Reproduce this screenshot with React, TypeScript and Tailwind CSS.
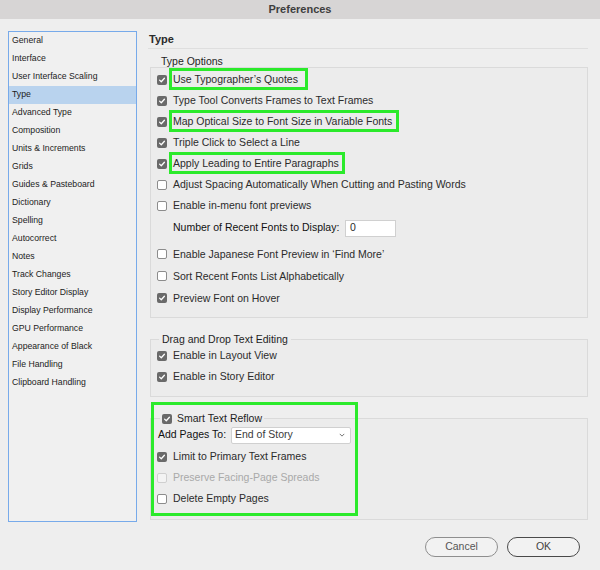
import React from "react";

const font = { fontFamily: '"Liberation Sans", Arial, sans-serif' };

const sidebarItems = [
  "General",
  "Interface",
  "User Interface Scaling",
  "Type",
  "Advanced Type",
  "Composition",
  "Units & Increments",
  "Grids",
  "Guides & Pasteboard",
  "Dictionary",
  "Spelling",
  "Autocorrect",
  "Notes",
  "Track Changes",
  "Story Editor Display",
  "Display Performance",
  "GPU Performance",
  "Appearance of Black",
  "File Handling",
  "Clipboard Handling",
];

function Check({ checked, disabled }: { checked?: boolean; disabled?: boolean }) {
  if (checked) {
    return (
      <span className="flex size-[10px] shrink-0 items-center justify-center rounded-[2px] bg-[#6a6a6a]">
        <svg viewBox="0 0 10 10" className="size-[8px]">
          <path d="M2 5.2 L4.1 7.2 L8 2.8" fill="none" stroke="#fff" strokeWidth="1.6" strokeLinecap="round" strokeLinejoin="round" />
        </svg>
      </span>
    );
  }
  return (
    <span
      className={
        disabled
          ? "size-[10px] shrink-0 rounded-[2px] border border-[#cfcfcf] bg-[#f3f3f3]"
          : "size-[10px] shrink-0 rounded-[2px] border border-[#8c8c8c] bg-white"
      }
    />
  );
}

function Row({
  label,
  checked,
  disabled,
  h = "h-[21px]",
  mark,
}: {
  label: string;
  checked?: boolean;
  disabled?: boolean;
  h?: string;
  mark?: string;
}) {
  return (
    <div className={`flex items-center gap-[6px] pl-[6px] ${h}`}>
      <Check checked={checked} disabled={disabled} />
      <span className={`relative whitespace-nowrap text-[10.5px] leading-[13px] ${disabled ? "text-[#a9a9a9]" : "text-[#2b2b2b]"}`}>
        {label}
        {mark && <span className={`pointer-events-none absolute -left-[4px] -top-[5px] h-[22px] border-[3px] border-[#2bea2b] ${mark}`} />}
      </span>
    </div>
  );
}

export default function App() {
  return (
    <div className="h-[570px] w-[600px] overflow-hidden bg-[#eeeeee]" style={font}>
      <div className="flex h-[19px] items-center justify-center bg-[#d7d5d5] text-[11px] font-bold text-[#3e3e3e]">
        Preferences
      </div>

      <div className="flex pl-[8px] pt-[12px]">
        {/* category list */}
        <div className="h-[491px] w-[129px] border border-[#77aaea] bg-[#f0f0f0]">
          {sidebarItems.map((item) => (
            <div
              key={item}
              className={`flex h-[18px] items-center pl-[3px] text-[8.7px] text-[#1c1c1c] ${item === "Type" ? "bg-[#b9d3ee]" : ""}`}
            >
              {item}
            </div>
          ))}
        </div>

        <div className="relative ml-[11px] w-[440px]">
          <div className="h-[18px] border-b border-[#dedede] pl-px text-[11px] font-bold leading-[17px] text-[#2b2b2b]">Type</div>

          <div className="mt-[6px] pl-[13px] text-[10.5px] leading-[13px] text-[#1e1e1e]">Type Options</div>
          <div className="-mt-px ml-[2px] h-[251px] border border-[#dadada] bg-[#ececec] pt-px">
            <Row label="Use Typographer’s Quotes" checked mark="w-[139px]" />
            <Row label="Type Tool Converts Frames to Text Frames" checked />
            <Row label="Map Optical Size to Font Size in Variable Fonts" checked mark="w-[230px]" />
            <Row label="Triple Click to Select a Line" checked />
            <Row label="Apply Leading to Entire Paragraphs" checked mark="w-[176px]" />
            <Row label="Adjust Spacing Automatically When Cutting and Pasting Words" />
            <Row label="Enable in-menu font previews" />
            <div className="flex h-[24px] items-center pl-[22px]">
              <span className="w-[172px] shrink-0 whitespace-nowrap text-[10.5px] text-[#111]">Number of Recent Fonts to Display:</span>
              <div className="flex h-[17px] w-[51px] items-center border border-[#d0d0d0] bg-white pl-[4px] text-[10.5px] text-[#2b2b2b]">
                0
              </div>
            </div>
            <div className="mt-[3px]">
              <Row label="Enable Japanese Font Preview in ‘Find More’" h="h-[22px]" />
              <Row label="Sort Recent Fonts List Alphabetically" h="h-[22px]" />
              <Row label="Preview Font on Hover" checked h="h-[22px]" />
            </div>
          </div>

          <fieldset className="ml-[2px] mt-[16px] h-[63px] border border-[#dadada] bg-[#ececec]">
            <legend className="ml-[8px] px-[3px] text-[10.5px] leading-[11px] text-[#1e1e1e]">Drag and Drop Text Editing</legend>
            <Row label="Enable in Layout View" checked />
            <Row label="Enable in Story Editor" checked />
          </fieldset>

          <fieldset className="ml-[2px] mt-[16px] h-[107px] border border-[#dadada] bg-[#ececec]">
            <legend className="ml-[9px] flex items-center gap-[5px] px-[2px] text-[10.5px] leading-[11px] text-[#1e1e1e]">
              <Check checked />
              Smart Text Reflow
            </legend>
            <div className="flex h-[22px] items-center pl-[7px]">
              <span className="w-[73px] shrink-0 whitespace-nowrap text-[10.5px] text-[#111]">Add Pages To:</span>
              <div className="flex h-[17px] w-[120px] items-center justify-between rounded-[2px] border border-[#d0d0d0] bg-white pl-[3px] pr-[5px] text-[10.5px] text-[#3a3a3a]">
                End of Story
                <svg viewBox="0 0 8 5" className="h-[4px] w-[6px]">
                  <path d="M1 1 L4 4 L7 1" fill="none" stroke="#666" strokeWidth="1.2" />
                </svg>
              </div>
            </div>
            <Row label="Limit to Primary Text Frames" checked />
            <Row label="Preserve Facing-Page Spreads" disabled />
            <Row label="Delete Empty Pages" />
          </fieldset>

          {/* annotation around smart text reflow */}
          <div className="pointer-events-none absolute left-[3px] top-[371px] h-[114px] w-[207px] border-[3px] border-[#2bea2b]" />

          <div className="mt-[17px] flex justify-end gap-[9px] pr-[8px]">
            <button className="flex h-[20px] w-[73px] items-center justify-center rounded-full border border-[#8e8e8e] bg-[#f2f2f2] text-[10.5px] text-[#555]">
              Cancel
            </button>
            <button className="flex h-[20px] w-[73px] items-center justify-center rounded-full border-[1.5px] border-[#4a4a4a] bg-[#f2f2f2] text-[10.5px] text-[#444]">
              OK
            </button>
          </div>
        </div>
      </div>
    </div>
  );
}
